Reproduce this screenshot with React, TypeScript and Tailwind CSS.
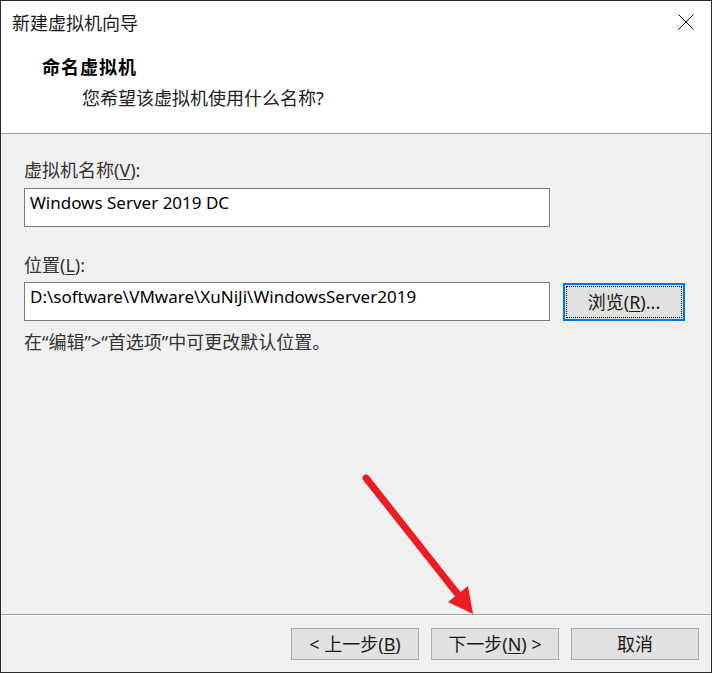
import React from "react";

const font = "font-['Noto_Sans','Noto_Sans_CJK_SC',sans-serif]";

function Btn({ children }: { children: React.ReactNode }) {
  return (
    <button className="w-[128px] h-[32px] border border-[#adadad] bg-[#e1e1e1] text-[18px] text-[#1a1a1a] flex items-center justify-center leading-none">
      {children}
    </button>
  );
}

function App() {
  return (
    <div
      className={`relative w-[712px] h-[673px] border border-[#2b2b2b] bg-[#f0f0f0] flex flex-col ${font} text-[#1a1a1a]`}
    >
      {/* header */}
      <div className="h-[133px] bg-white border-b border-[#a0a0a0] flex flex-col">
        <div className="h-[44px] flex items-center justify-between pl-[11px] pr-[17px]">
          <span className="text-[18px] leading-none">新建虚拟机向导</span>
          <svg width="16" height="16" viewBox="0 0 16 16" className="mt-[-2px]">
            <path d="M0.5 0.5 L15.5 15.5 M15.5 0.5 L0.5 15.5" stroke="#000" strokeWidth="1" />
          </svg>
        </div>
        <div className="pl-[41px] mt-[10px] text-[18px] font-bold leading-[24px] tracking-[1px] text-black">
          命名虚拟机
        </div>
        <div className="pl-[81px] mt-[7px] text-[18px] leading-[24px] text-[#222]">
          您希望该虚拟机使用什么名称?
        </div>
      </div>

      {/* body */}
      <div className="flex-1 flex flex-col pl-[23px]">
        <div className="mt-[25px] text-[18px] leading-[22px] text-[#333]">
          虚拟机名称(<span className="underline underline-offset-2">V</span>):
        </div>
        <div className="mt-[7px] w-[526px] h-[39px] border border-[#7a7a7a] bg-white pl-[5px] pt-[3px] text-[17px] leading-[22px] text-black">
          Windows Server 2019 DC
        </div>
        <div className="mt-[27px] text-[18px] leading-[22px] text-[#333]">
          位置(<span className="underline underline-offset-2">L</span>):
        </div>
        <div className="mt-[6px] flex items-start gap-[13px]">
          <div className="w-[526px] h-[39px] border border-[#7a7a7a] bg-white pl-[5px] pt-[3px] text-[17px] leading-[22px] text-black whitespace-nowrap">
            D:\software\VMware\XuNiJi\WindowsServer2019
          </div>
          <button className="mt-[1px] w-[122px] h-[38px] border-2 border-[#0078d7] bg-[#e1e1e1] p-[1px]">
            <span className="w-full h-full border border-dotted border-black flex items-center justify-center text-[18px] leading-none text-[#1a1a1a]">
              浏览(<span className="underline underline-offset-2">R</span>)...
            </span>
          </button>
        </div>
        <div className="mt-[10px] text-[18px] leading-[22px] text-[#333]">
          在“编辑”&gt;“首选项”中可更改默认位置。
        </div>
      </div>

      {/* footer */}
      <div className="border-t border-[#a0a0a0]">
        <div className="border-t border-white flex justify-end gap-[12px] pt-[12px] pb-[12px] pr-[12px]">
          <Btn>
            &lt; 上一步(<span className="underline underline-offset-2">B</span>)
          </Btn>
          <Btn>
            下一步(<span className="underline underline-offset-2">N</span>) &gt;
          </Btn>
          <Btn>取消</Btn>
        </div>
      </div>

      {/* red annotation arrow */}
      <svg
        className="absolute left-[-1px] top-[-1px] pointer-events-none"
        width="712"
        height="673"
        viewBox="0 0 712 673"
      >
        <line x1="366" y1="478" x2="460" y2="597" stroke="#ed1c24" strokeWidth="7" strokeLinecap="round" />
        <polygon points="448,602 468,586 473,614" fill="#ed1c24" />
      </svg>
    </div>
  );
}

export default App;
